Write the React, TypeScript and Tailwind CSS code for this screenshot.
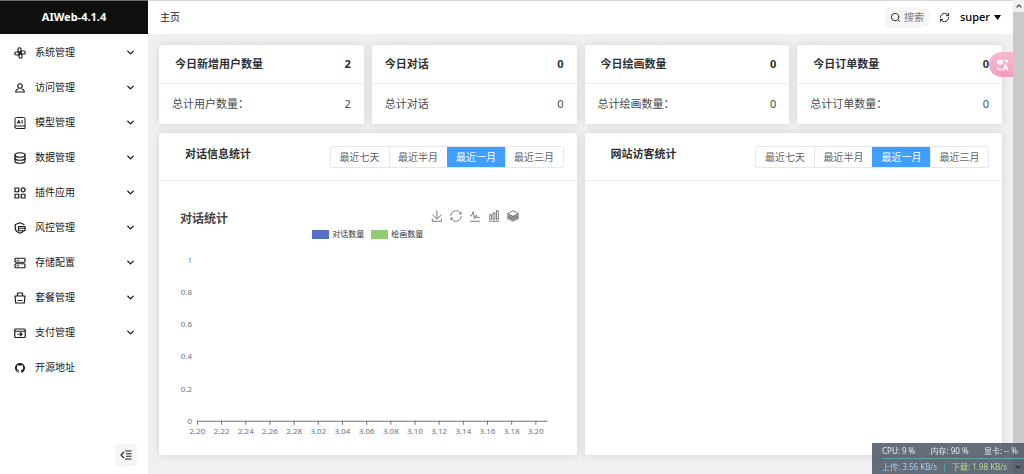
import { useState } from 'react'
import type { ReactNode } from 'react'
import { ChevronDown, ChevronUp, RefreshCw, Search } from 'lucide-react'
import { RiGithubFill } from 'react-icons/ri'

type MenuItem = {
  label: string
  icon: ReactNode
  href?: string
}

function LineIcon({ children }: { children: ReactNode }) {
  return (
    <svg
      viewBox="0 0 24 24"
      className="size-3 shrink-0"
      fill="none"
      stroke="currentColor"
      strokeWidth="2.4"
      strokeLinecap="round"
      strokeLinejoin="round"
      aria-hidden="true"
    >
      {children}
    </svg>
  )
}

const menuItems: MenuItem[] = [
  {
    label: '系统管理',
    icon: (
      <LineIcon>
        <path d="M14 14V4.500a3 3 0 0 0-6 0V9a3 3 0 0 0 3 3" />
        <path d="M10 14h9.500a3 3 0 0 0 0-6H15a3 3 0 0 0-3 3" />
        <path d="M10 10v9.500a3 3 0 0 0 6 0V15a3 3 0 0 0-3-3" />
        <path d="M14 10H4.500a3 3 0 0 0 0 6H9a3 3 0 0 0 3-3" />
      </LineIcon>
    ),
  },
  {
    label: '访问管理',
    icon: (
      <LineIcon>
        <circle cx="12" cy="8" r="4.500" />
        <path d="M8 14c-3 .500-4.500 3-4.500 6h17c0-3-1.500-5.500-4.500-6" />
      </LineIcon>
    ),
  },
  {
    label: '模型管理',
    icon: (
      <LineIcon>
        <path
          d="M2 20V4a3 3 0 0 1 3-3h14a3 3 0 0 1 3 3v14H4.500a2.500 2.500 0 0 0 0 5H22v-5"
          strokeWidth="2"
        />
        <path d="M7 12.500l2.500-6L12 12.500M8 11h3M16 6.500v6" strokeWidth="2" />
      </LineIcon>
    ),
  },
  {
    label: '数据管理',
    icon: (
      <LineIcon>
        <ellipse cx="12" cy="6" rx="10" ry="4.500" />
        <path d="M2 6v12c0 2.500 4.500 4.500 10 4.500s10-2 10-4.500V6" />
        <path d="M2 12c0 2.500 4.500 4.500 10 4.500s10-2 10-4.500" />
      </LineIcon>
    ),
  },
  {
    label: '插件应用',
    icon: (
      <LineIcon>
        <path d="M2 2h7.500v7.500H2zM2 14.500h7.500V22H2zM14.500 14.500H22V22h-7.500z" />
        <circle cx="18.250" cy="5.750" r="4" />
      </LineIcon>
    ),
  },
  {
    label: '风控管理',
    icon: (
      <LineIcon>
        <path d="M20 5l-8-3.500L2.500 5v7c0 5 3.500 8.500 9.500 10.500 2.500-.800 4.500-2 6-3.500" />
        <path d="M9 9h13v8.500H9z" />
        <path d="M9 12.500h13" />
      </LineIcon>
    ),
  },
  {
    label: '存储配置',
    icon: (
      <LineIcon>
        <rect x="2" y="2.500" width="20" height="8" rx="2" />
        <rect x="2" y="13.500" width="20" height="8" rx="2" />
        <path d="M6.500 6.500h2.500M6.500 17.500h2.500" />
      </LineIcon>
    ),
  },
  {
    label: '套餐管理',
    icon: (
      <LineIcon>
        <path d="M2 8h20l-1.500 14h-17zM7 8V2h10v6M8 17h8" />
      </LineIcon>
    ),
  },
  {
    label: '支付管理',
    icon: (
      <LineIcon>
        <rect x="1.500" y="4" width="21" height="17" rx="2" />
        <path d="M2 8.500h20" />
        <path d="M8 14.500h8M13 11.500l3 3-3 3" />
      </LineIcon>
    ),
  },
  {
    label: '开源地址',
    icon: <RiGithubFill className="size-3 shrink-0" aria-hidden="true" />,
    href: '#github',
  },
]

const stats = [
  { title: '今日新增用户数量', today: 2, totalLabel: '总计用户数量：', total: 2, indent: true },
  { title: '今日对话', today: 0, totalLabel: '总计对话', total: 0, indent: false },
  { title: '今日绘画数量', today: 0, totalLabel: '总计绘画数量：', total: 0, indent: true },
  { title: '今日订单数量', today: 0, totalLabel: '总计订单数量：', total: 0, indent: true },
]

const ranges = ['最近七天', '最近半月', '最近一月', '最近三月']

const tools = [
  {
    label: '保存为图片',
    path: 'M4.7,22.9L29.3,45.5L54.7,23.4M4.6,43.6L4.6,58L53.8,58L53.8,43.6M29.2,45.1L29.2,0',
  },
  {
    label: '还原',
    path: 'M47,18.9h9.8V8.7M56.3,20.1C52.1,9,40.5,0.6,26.8,2.1C12.6,3.7,1.6,16.2,2.1,30.6M13,41.1H3.1v10.2M3.7,39.9c4.2,11.1,15.8,19.5,29.5,18c14.2-1.6,25.2-14.1,24.7-28.5',
  },
  {
    label: '切换为折线图',
    path: 'M4.1,28.9h7.1l9.3-22l7.4,38l9.7-19.7l3,12.8h14.9M4.1,58h51.4',
  },
  {
    label: '切换为柱状图',
    path: 'M6.7,22.9h10V48h-10V22.9zM24.9,13h10v35h-10V13zM43.2,2h10v46h-10V2zM3.1,58h53.7',
  },
  {
    label: '切换为堆叠',
    path: 'M8.2,38.4l-8.4,4.1l30.6,15.3L60,42.5l-8.1-4.1l-21.5,11L8.2,38.4z M51.9,30l-8.1,4.2l-13.4,6.9l-13.9-6.9L8.2,30l-8.4,4.2l8.4,4.2l22.2,11l21.5-11l8.1-4.2L51.9,30z M51.9,21.7l-8.1,4.2L35.7,30l-5.3,2.8L24.9,30l-8.4-4.1l-8.3-4.2l-8.4,4.2L8.2,30l8.3,4.2l13.9,6.9l13.4-6.9l8.1-4.2l8.1-4.1L51.9,21.7zM30.4,2.2L-0.2,17.5l8.4,4.1l8.3,4.2l8.4,4.2l5.5,2.7l5.3-2.7l8.1-4.2l8.1-4.2l8.1-4.1L30.4,2.2z',
  },
]

const yLabels = ['1', '0.8', '0.6', '0.4', '0.2', '0']
const xLabels = [
  '2.20', '2.22', '2.24', '2.26', '2.28', '3.02', '3.04', '3.06',
  '3.08', '3.10', '3.12', '3.14', '3.16', '3.18', '3.20',
]

function Sidebar() {
  return (
    <aside className="flex w-[148px] shrink-0 flex-col bg-white">
      <div className="flex h-[34px] items-center justify-center border-t border-[#6b6b6b] bg-[#0f0f0f] text-[11px] font-bold text-white">
        AIWeb-4.1.4
      </div>
      <nav className="flex flex-col pt-px">
        {menuItems.map((item) =>
          item.href ? (
            <a key={item.label} href={item.href} className="flex h-[35px] items-center gap-[9px] pl-3.5 pr-3">
              {item.icon}
              <span>{item.label}</span>
            </a>
          ) : (
            <button key={item.label} type="button" className="flex h-[35px] items-center gap-[9px] pl-3.5 pr-3">
              {item.icon}
              <span className="grow text-left">{item.label}</span>
              <ChevronDown className="size-[11px]" strokeWidth={3} />
            </button>
          ),
        )}
      </nav>
      <div className="mt-auto flex justify-end pb-2 pr-[11px]">
        <button
          type="button"
          aria-label="收起菜单"
          className="flex size-[22px] items-center justify-center rounded bg-[#f5f5f5] text-[#222]"
        >
          <svg viewBox="0 0 24 24" className="size-3" fill="none" stroke="currentColor" strokeWidth="2.4" aria-hidden="true">
            <path d="M8 6l-6 6 6 6M10 4h13M12 9.500h11M12 14.500h11M10 20h13" />
          </svg>
        </button>
      </div>
    </aside>
  )
}

function TopBar() {
  return (
    <header className="flex h-[34px] items-center justify-between border-t border-[#d8d8d8] bg-white pl-3 pr-3">
      <a href="#home">主页</a>
      <div className="flex items-center">
        <button type="button" className="flex h-[21px] items-center gap-[3px] rounded-md bg-[#f5f5f5] px-[5px] text-[10px] text-[#777]">
          <Search className="size-[11px] text-[#222]" />
          搜索
        </button>
        <button type="button" aria-label="刷新" className="ml-2.5">
          <RefreshCw className="size-[11px]" />
        </button>
        <button type="button" className="ml-2.5 flex items-center gap-1 text-[11px] font-medium text-black">
          super
          <svg viewBox="0 0 7 5" className="w-[7px]" fill="currentColor" aria-hidden="true">
            <path d="M0 0h7L3.500 5z" />
          </svg>
        </button>
      </div>
    </header>
  )
}

function Card({ children }: { children: ReactNode }) {
  return <section className="rounded-xs bg-white shadow-[0_0_8px_rgba(0,0,0,0.12)]">{children}</section>
}

function RangePicker({ name }: { name: string }) {
  const [range, setRange] = useState('最近一月')

  return (
    <fieldset className="flex overflow-hidden rounded-[3px] border border-[#e4e7ed] text-[10px] text-[#606266]">
      {ranges.map((item) => (
        <label
          key={item}
          className="flex h-5 w-[58px] cursor-pointer items-center justify-center border-l border-[#e4e7ed] first:border-l-0 has-checked:border-[#409eff] has-checked:bg-[#409eff] has-checked:text-white"
        >
          <input
            type="radio"
            name={name}
            value={item}
            checked={range === item}
            onChange={() => setRange(item)}
            className="sr-only"
          />
          {item}
        </label>
      ))}
    </fieldset>
  )
}

function PanelHeader({ title, name }: { title: string; name: string }) {
  return (
    <div className="flex h-12 items-start justify-between border-b border-[#ebeef5] pl-[26px] pr-[13px] pt-[13px]">
      <h2 className="text-[11px] font-bold leading-4 text-[#303133]">{title}</h2>
      <RangePicker name={name} />
    </div>
  )
}

function ChatChart() {
  return (
    <div className="px-[17px] pb-3 pt-7">
      <div className="flex h-[17px] items-start justify-between pl-1 pr-[41px]">
        <h3 className="text-[12px] font-bold leading-5 text-[#464646]">对话统计</h3>
        <div className="flex gap-[7px] pt-px">
          {tools.map((tool) => (
            <button key={tool.label} type="button" aria-label={tool.label}>
              <svg viewBox="-2 -2 64 64" className="block size-3" fill="none" stroke="#666" strokeWidth="4.500" aria-hidden="true">
                <path d={tool.path} />
              </svg>
            </button>
          ))}
        </div>
      </div>
      <div className="flex h-4 items-center justify-center gap-[7px] text-[8px] text-[#333]">
        <span className="flex items-center gap-[3px]">
          <i className="h-[9px] w-[17px] bg-[#5470c6]" />
          对话数量
        </span>
        <span className="flex items-center gap-[3px]">
          <i className="h-[9px] w-[17px] bg-[#91cc75]" />
          绘画数量
        </span>
      </div>
      <svg viewBox="0 0 384 201" className="w-full" fontSize="8" fill="#6e7079" role="img" aria-label="对话统计">
        {yLabels.map((label, i) => (
          <text key={label} x="16" y={21 + i * 32.2} textAnchor="end">
            {label}
          </text>
        ))}
        <path d="M21 179.500H372" stroke="#6e7079" />
        {xLabels.map((label, i) => (
          <g key={label}>
            <path d={`M${21.5 + i * 24.2} 179v4`} stroke="#6e7079" />
            <text x={21.5 + i * 24.2} y="192" textAnchor="middle">
              {label}
            </text>
          </g>
        ))}
      </svg>
    </div>
  )
}

function SystemMonitor() {
  return (
    <div className="fixed bottom-0 right-0 flex h-[31px] w-[152px] flex-col bg-[#4b5563]/85 pl-2.5 text-[8px] text-[#e5e7eb]">
      <div className="flex grow items-center justify-between pr-1.5">
        <span>CPU: 9 %</span>
        <span>内存: 90 %</span>
        <span>显卡: -- %</span>
      </div>
      <div className="h-px bg-[#5fa3a8]" />
      <div className="flex grow items-center justify-between whitespace-nowrap pr-0.5">
        <span className="text-[#a9cdee]">上传: 3.56 KB/s</span>
        <span className="h-2 w-px bg-[#5fa3a8]" />
        <span className="text-[#b8dc8c]">下载: 1.98 KB/s</span>
        <ChevronDown className="size-2 text-[#333]" strokeWidth={4} />
      </div>
    </div>
  )
}

export default function App() {
  return (
    <div className="flex min-h-screen bg-[#f0f0f0] font-['Noto_Sans','Noto_Sans_CJK_SC',sans-serif] text-[10px] text-[#1a1a1a]">
      <Sidebar />

      <div className="flex min-w-0 grow flex-col">
        <TopBar />
        <main className="flex flex-col gap-[9px] px-[11px] pb-[19px] pt-[11px]">
          <div className="grid grid-cols-4 gap-2">
            {stats.map((stat) => (
              <Card key={stat.title}>
                <div
                  className={`flex h-[39px] items-center justify-between border-b border-[#ebeef5] pr-[13px] text-[11px] font-bold text-[#303133] ${
                    stat.indent ? 'pl-4' : 'pl-[13px]'
                  }`}
                >
                  <h2>{stat.title}</h2>
                  <span>{stat.today}</span>
                </div>
                <div className="flex h-10 items-center justify-between px-[13px] text-[11px] text-[#484a4d]">
                  <span>{stat.totalLabel}</span>
                  <span>{stat.total}</span>
                </div>
              </Card>
            ))}
          </div>

          <div className="grid grid-cols-2 gap-2">
            <Card>
              <PanelHeader title="对话信息统计" name="chat-range" />
              <ChatChart />
            </Card>
            <Card>
              <PanelHeader title="网站访客统计" name="visitor-range" />
            </Card>
          </div>
        </main>
      </div>

      {/* Scroll track */}
      <div className="flex w-[11px] shrink-0 flex-col bg-[#c9c9c9]">
        <div className="flex h-3 items-center justify-center bg-[#f0f0f0] text-[#555]">
          <ChevronUp className="size-2" strokeWidth={4} />
        </div>
      </div>

      {/* Floating translate button */}
      <button
        type="button"
        aria-label="翻译"
        className="fixed right-[11px] top-[52px] flex h-[25px] w-6 items-center justify-center rounded-l-full bg-linear-to-b from-[#f8b3d0]/90 to-[#ef94b9]/90 pl-1 text-white"
      >
        <svg viewBox="0 0 24 24" className="size-3" fill="none" stroke="currentColor" strokeWidth="2.6" aria-hidden="true">
          <path d="M1 4h10v5H1zM6 1v12M15 3h3a3 3 0 0 1 3 3v2M2 16v2a3 3 0 0 0 3 3h4" />
          <path d="M12 23l5-12 5 12M14 19h6" />
        </svg>
      </button>

      <SystemMonitor />
    </div>
  )
}
